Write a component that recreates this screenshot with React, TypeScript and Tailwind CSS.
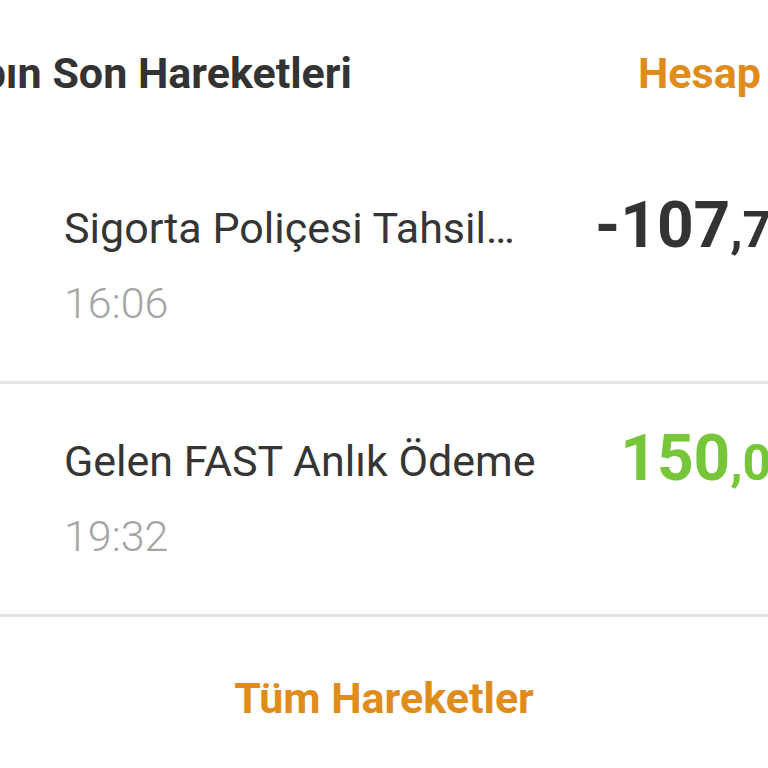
const transactions = [
  { id: "t1", title: "Sigorta Poliçesi Tahsil…", time: "16:06", whole: "-107", decimals: ",75", tone: "text-[#333333]" },
  { id: "t2", title: "Gelen FAST Anlık Ödeme", time: "19:32", whole: "150", decimals: ",00", tone: "text-[#77c63a]" }
];

function TransactionRow({ item }: { item: (typeof transactions)[number] }) {
  return (
    <>
      <div className="flex w-[800px] items-start justify-between pl-[64px] pb-[54px] whitespace-nowrap">
        <div className="pt-[53px]">
          <p className="text-[43px] leading-[48px] text-[#353535]">{item.title}</p>
          <p className="mt-[27px] text-[43px] font-light leading-[48px] text-[#a5a5a5]">{item.time}</p>
        </div>
        <p className={`pt-[43px] font-bold leading-[64px] ${item.tone}`}>
          <span className="text-[64px]">{item.whole}</span>
          <span className="text-[50px]">{item.decimals}</span>
        </p>
      </div>
      <div className="h-[3px] w-full bg-[#e3e3e3]" />
    </>
  );
}

export default function App() {
  return (
    <div className="h-[768px] w-[768px] overflow-hidden bg-white font-['Roboto',sans-serif]">
      <div className="flex h-[151px] pt-[49px] whitespace-nowrap text-[43px] font-bold leading-[48px]">
        <div className="w-[638px] shrink-0">
          <span className="ml-[-117px] text-[#333333]">Hesabın Son Hareketleri</span>
        </div>
        <span className="shrink-0 text-[#e08c1c]">Hesap Hareketleri</span>
      </div>
      {transactions.map((t) => (
        <TransactionRow key={t.id} item={t} />
      ))}
      <div className="pt-[57px] text-center text-[43px] font-bold leading-[48px] text-[#e08c1c]">
        Tüm Hareketler
      </div>
    </div>
  );
}
